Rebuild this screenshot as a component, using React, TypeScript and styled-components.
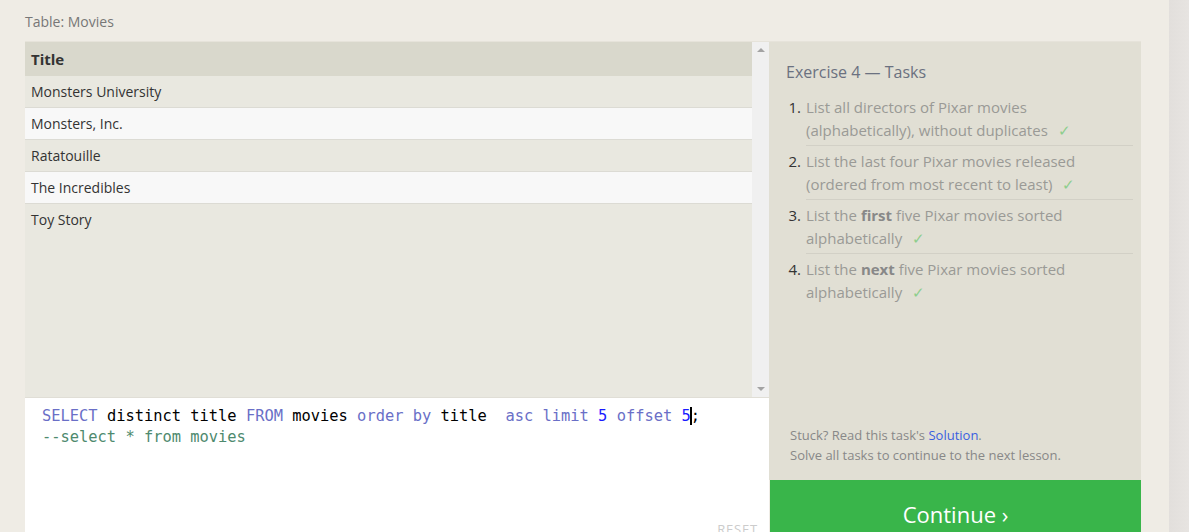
import React from "react";
import styled, { createGlobalStyle } from "styled-components";

const Global = createGlobalStyle`
  html, body { margin: 0; padding: 0; background: #efece5; }
  body { font-family: "Open Sans", "Noto Sans", sans-serif; overflow: hidden; }
`;

const Page = styled.div`
  display: flex;
  height: 532px;
  width: 1189px;
  overflow: hidden;
`;

const Main = styled.div`
  flex: 1;
  padding: 11px 28px 0 25px;
  display: flex;
  flex-direction: column;
`;

const Strip = styled.div`
  width: 20px;
  background: linear-gradient(to right, #e2dfdc, #e7e4e1);
`;

const Caption = styled.div`
  font-size: 14px;
  color: #777;
  height: 19px;
  line-height: 21px;
  margin-bottom: 11px;
`;

const Panel = styled.div`
  display: grid;
  grid-template-columns: 744px 1fr;
  border-top: 1px solid #e6e3da;
  flex: 1;
  min-height: 0;
`;

const LeftCol = styled.div`
  display: flex;
  flex-direction: column;
`;

const TableArea = styled.div`
  height: 355px;
  display: flex;
  background: #e9e8e0;
  border-bottom: 1px solid #e0ded6;
`;

const TableBody = styled.div`
  flex: 1;
  display: flex;
  flex-direction: column;
`;

const HeaderRow = styled.div`
  height: 34px;
  background: #d9d8cc;
  display: flex;
  align-items: center;
  padding-left: 6px;
  padding-bottom: 1px;
  box-sizing: border-box;
  font-weight: 700;
  font-size: 15px;
  color: #333;
`;

const Row = styled.div<{ $alt: boolean; $last: boolean }>`
  height: 31px;
  border-bottom: 1px solid ${(p) => (p.$last ? "transparent" : "#dcdbd4")};
  background: ${(p) => (p.$alt ? "#f8f8f8" : "#e9e8e0")};
  display: flex;
  align-items: center;
  padding-left: 6px;
  font-size: 14px;
  color: #333;
`;

const ScrollBar = styled.div`
  width: 17px;
  background: #f0f0f0;
  display: flex;
  flex-direction: column;
  justify-content: space-between;
  align-items: center;
  padding: 6px 0 6px;
  box-sizing: border-box;
`;

const Arrow = styled.div<{ $down?: boolean }>`
  width: 0;
  height: 0;
  border-left: 4px solid transparent;
  border-right: 4px solid transparent;
  ${(p) =>
    p.$down
      ? "border-top: 4px solid #a3a3a3;"
      : "border-bottom: 4px solid #a3a3a3;"}
`;

const Editor = styled.div`
  flex: 1;
  background: #fff;
  position: relative;
  padding: 8px 0 0 17px;
  font-family: "DejaVu Sans Mono", monospace;
  font-size: 15.4px;
  line-height: 21px;
  white-space: pre;
  color: #000;
`;

const Kw = styled.span`
  color: #6a6fc7;
`;
const Num = styled.span`
  color: #1a1aff;
`;
const Comment = styled.span`
  color: #4e8a6e;
`;
const Caret = styled.span`
  border-left: 2px solid #000;
  margin-left: -1px;
  margin-right: -1px;
`;

const Reset = styled.div`
  position: absolute;
  right: 11px;
  bottom: 3px;
  font-family: "Open Sans", sans-serif;
  font-size: 13px;
  line-height: 16px;
  color: #ccc;
  letter-spacing: 0.8px;
`;

const Side = styled.div`
  display: flex;
  flex-direction: column;
`;

const SideBody = styled.div`
  height: 438px;
  background: #e1dfd4;
  padding: 19px 8px 0 17px;
  box-sizing: border-box;
  display: flex;
  flex-direction: column;
`;

const SideTitle = styled.div`
  font-size: 16px;
  color: #6b7180;
  line-height: 22px;
  margin-bottom: 13px;
`;

const TaskList = styled.ol`
  margin: 0;
  padding: 0;
  list-style: none;
`;

const Task = styled.li`
  display: flex;
  font-size: 15px;
  line-height: 22.5px;
  color: #9a9a96;
  margin-bottom: 4px;
`;

const TaskNum = styled.span`
  width: 15px;
  text-align: right;
  color: #333;
  flex-shrink: 0;
  margin-left: 0px;
  margin-right: 5px;
`;

const TaskText = styled.span<{ $last?: boolean }>`
  flex: 1;
  border-bottom: 1px solid ${(p) => (p.$last ? "transparent" : "#d2d0c6")};
  padding-bottom: 4px;
  & b { color: #888; font-weight: 700; }
`;

const Check = styled.span`
  color: #8dce8d;
  margin-left: 10px;
`;

const Spacer = styled.div`
  flex: 1;
`;

const Help = styled.div`
  font-size: 13px;
  color: #888;
  line-height: 20px;
  padding-left: 4px;
  margin-bottom: 15px;
  & a { color: #3a5ee0; text-decoration: none; }
`;

const Continue = styled.button`
  height: 60px;
  border: none;
  background: #39b54a;
  color: #fff;
  font-family: "Open Sans", sans-serif;
  font-size: 22px;
  padding: 8px 0 0;
  margin-left: 1px;
  text-align: center;
  cursor: pointer;
  line-height: 44px;
`;

const rows = [
  "Monsters University",
  "Monsters, Inc.",
  "Ratatouille",
  "The Incredibles",
  "Toy Story",
];

const tasks: { n: number; content: React.ReactNode }[] = [
  {
    n: 1,
    content: (
      <>
        List all directors of Pixar movies
        <br />
        (alphabetically), without duplicates<Check>✓</Check>
      </>
    ),
  },
  {
    n: 2,
    content: (
      <>
        List the last four Pixar movies released
        <br />
        (ordered from most recent to least)<Check>✓</Check>
      </>
    ),
  },
  {
    n: 3,
    content: (
      <>
        List the <b>first</b> five Pixar movies sorted
        <br />
        alphabetically<Check>✓</Check>
      </>
    ),
  },
  {
    n: 4,
    content: (
      <>
        List the <b>next</b> five Pixar movies sorted
        <br />
        alphabetically<Check>✓</Check>
      </>
    ),
  },
];

export default function App() {
  return (
    <Page>
      <Global />
      <Main>
        <Caption>Table: Movies</Caption>
        <Panel>
          <LeftCol>
            <TableArea>
              <TableBody>
                <HeaderRow>Title</HeaderRow>
                {rows.map((r, i) => (
                  <Row key={r} $alt={i % 2 === 1} $last={i === rows.length - 1}>
                    {r}
                  </Row>
                ))}
              </TableBody>
              <ScrollBar>
                <Arrow />
                <Arrow $down />
              </ScrollBar>
            </TableArea>
            <Editor>
              <div>
                <Kw>SELECT</Kw> distinct title <Kw>FROM</Kw> movies{" "}
                <Kw>order by</Kw> title  <Kw>asc limit</Kw> <Num>5</Num>{" "}
                <Kw>offset</Kw> <Num>5</Num>
                <Caret />;
              </div>
              <div>
                <Comment>--select * from movies</Comment>
              </div>
              <Reset>RESET</Reset>
            </Editor>
          </LeftCol>
          <Side>
            <SideBody>
              <SideTitle>Exercise 4 — Tasks</SideTitle>
              <TaskList>
                {tasks.map((t, i) => (
                  <Task key={t.n}>
                    <TaskNum>{t.n}.</TaskNum>
                    <TaskText $last={i === tasks.length - 1}>
                      {t.content}
                    </TaskText>
                  </Task>
                ))}
              </TaskList>
              <Spacer />
              <Help>
                Stuck? Read this task's <a href="#">Solution</a>.
                <br />
                Solve all tasks to continue to the next lesson.
              </Help>
            </SideBody>
            <Continue>Continue ›</Continue>
          </Side>
        </Panel>
      </Main>
      <Strip />
    </Page>
  );
}
